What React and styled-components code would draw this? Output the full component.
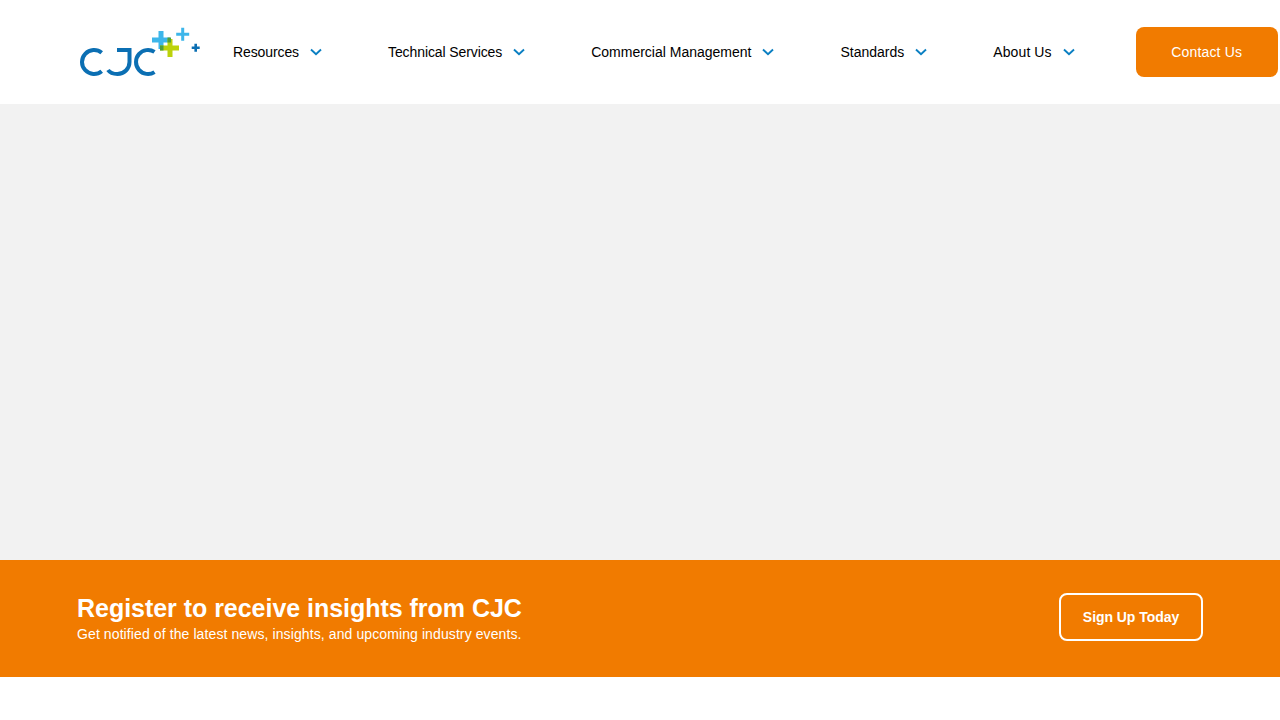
import React from "react";
import styled, { createGlobalStyle } from "styled-components";

const Global = createGlobalStyle`
  html, body { margin: 0; padding: 0; background: #fff; }
  body { font-family: "Liberation Sans", Arial, sans-serif; height: 720px; overflow: hidden; }
`;

const Header = styled.header`
  height: 104px;
  background: #fff;
  display: flex;
  align-items: center;
  padding-left: 79px;
`;

const LogoLink = styled.a`
  display: block;
  width: 122px;
  height: 52px;
  flex: none;
`;

const Nav = styled.nav`
  display: flex;
  align-items: center;
  gap: 66px;
  margin-left: 32px;
`;

const NavItem = styled.a`
  display: flex;
  align-items: center;
  gap: 11px;
  font-size: 14px;
  line-height: 20px;
  letter-spacing: ${(p) => p.$track}px;
  color: #000;
  white-space: nowrap;
`;

const ContactButton = styled.a`
  display: flex;
  align-items: center;
  justify-content: center;
  width: 142px;
  height: 50px;
  margin-left: 61px;
  flex: none;
  background: #f17b00;
  border-radius: 8px;
  color: #fff;
  font-size: 14px;
  letter-spacing: 0.15px;
`;

const Hero = styled.section`
  height: 456px;
  background: #f2f2f2;
`;

const Banner = styled.section`
  height: 117px;
  background: #f17b00;
  display: flex;
  align-items: center;
  justify-content: space-between;
  padding: 0 77px;
  color: #fff;
`;

const BannerText = styled.div`
  display: flex;
  flex-direction: column;
  margin-bottom: 2px;
`;

const BannerTitle = styled.h2`
  margin: 0;
  font-size: 25px;
  line-height: 30px;
  font-weight: 700;
  letter-spacing: -0.03px;
`;

const BannerSub = styled.p`
  margin: 2px 0 0;
  font-size: 14px;
  line-height: 18px;
  letter-spacing: 0.1px;
`;

const SignUp = styled.a`
  display: flex;
  align-items: center;
  justify-content: center;
  box-sizing: border-box;
  width: 144px;
  height: 48px;
  margin-bottom: 4px;
  border: 2px solid #fff;
  border-radius: 8px;
  font-size: 14px;
  font-weight: 700;
  letter-spacing: -0.05px;
  color: #fff;
`;

const Chevron = () => (
  <svg width="12" height="8" viewBox="0 0 12 8" fill="none">
    <path d="M1 1.5 6 6.2 11 1.5" stroke="#0a7fc2" strokeWidth="1.9" />
  </svg>
);

const Logo = () => (
  <svg width="122" height="52" viewBox="0 1 122 52" fill="none">
    <g stroke="#0b6fb3" strokeWidth="4">
      <path d="M22.7 27.8A12 12 0 1 0 22.7 46.2" />
      <path d="M38 25H50.5V37A12 12 0 0 1 38.5 49C34 49 31 48 29 45" />
      <path d="M76 26.9A12 12 0 1 0 76 47.1" transform="translate(-0.5 0)" />
    </g>
    <path d="M82 6v18M73 15h18" stroke="#3db6ea" strokeWidth="5" />
    <path d="M91 14v18M81 23h19" stroke="#bcd20a" strokeWidth="5" />
    <path d="M88.5 12.5h3.5v5h-3.5zM81 20.5h3.5v5H81z" fill="#4f9f3a" />
    <path d="M103.7 2.8v13M97.2 9.3h13" stroke="#3db6ea" strokeWidth="3" />
    <path d="M116.7 18.7v8M112.7 22.7h8" stroke="#0b6fb3" strokeWidth="2.6" />
  </svg>
);

const items = [
  ["Resources", -0.1],
  ["Technical Services", -0.1],
  ["Commercial Management", 0],
  ["Standards", 0],
  ["About Us", 0.1],
];

export default function App() {
  return (
    <>
      <Global />
      <Header>
        <LogoLink aria-label="CJC"><Logo /></LogoLink>
        <Nav>
          {items.map(([label, track]) => (
            <NavItem key={label} $track={track}>{label}<Chevron /></NavItem>
          ))}
        </Nav>
        <ContactButton>Contact Us</ContactButton>
      </Header>
      <Hero />
      <Banner>
        <BannerText>
          <BannerTitle>Register to receive insights from CJC</BannerTitle>
          <BannerSub>Get notified of the latest news, insights, and upcoming industry events.</BannerSub>
        </BannerText>
        <SignUp>Sign Up Today</SignUp>
      </Banner>
    </>
  );
}
